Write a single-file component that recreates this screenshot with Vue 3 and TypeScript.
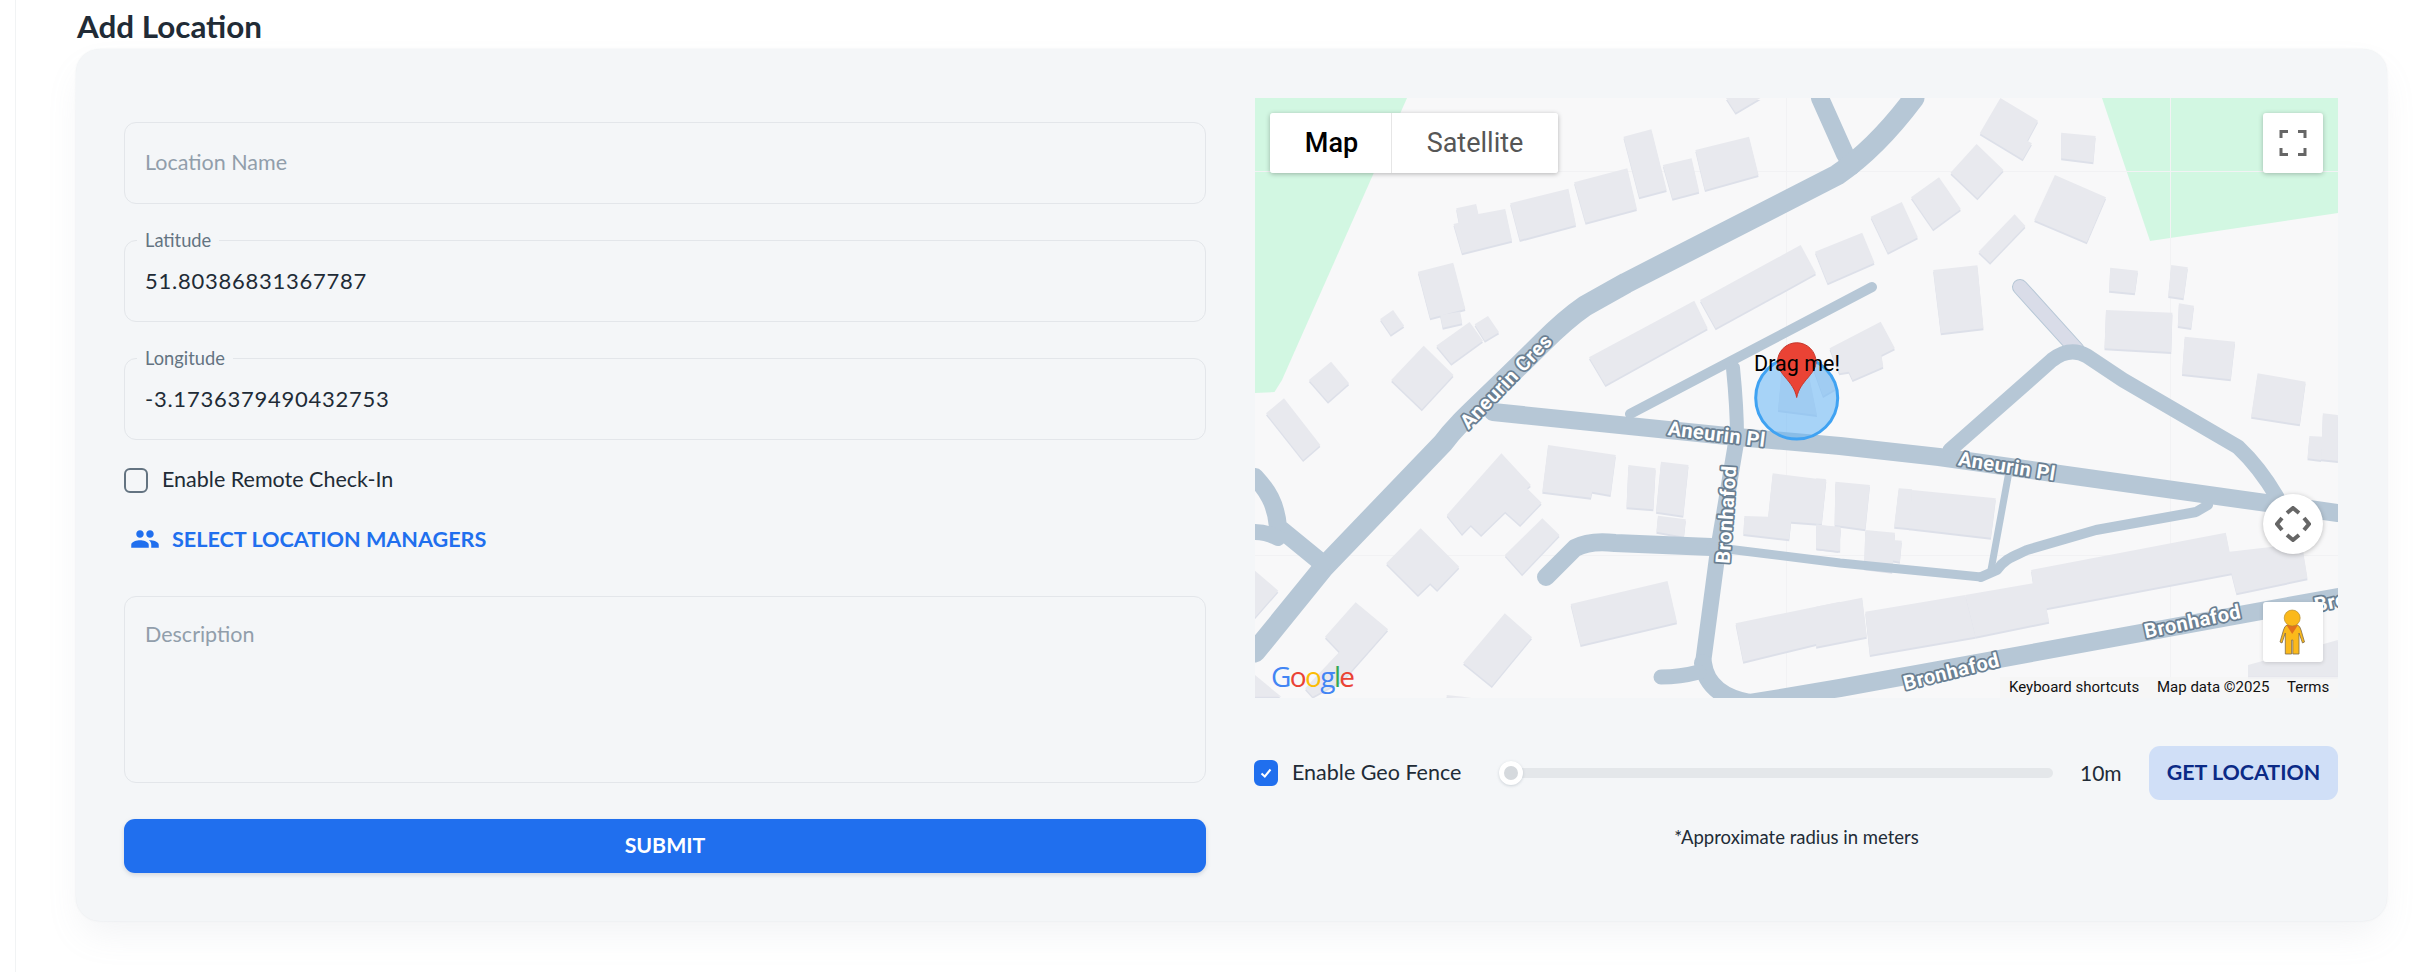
<script setup lang="ts">
type P = [number, number];
const L = (x: number, y: number): P => [x / 2.613 - 15, y / 3 - 18];
const R = (x: number, y: number): P => [565 + x / 2.605, y / 3 - 18];
const toPts = (f: (x: number, y: number) => P, a: number[]) => {
  const o: string[] = [];
  for (let i = 0; i < a.length; i += 2) {
    const p = f(a[i], a[i + 1]);
    o.push(p[0].toFixed(1) + ',' + p[1].toFixed(1));
  }
  return o.join(' ');
};
const left: number[][] = [
  [1270,54,1360,54,1295,98],
  [1002,170,1075,148,1115,330,1043,352],
  [1105,255,1180,235,1200,335,1130,356],
  [1190,210,1330,170,1355,285,1215,330],
  [873,307,1012,265,1037,387,903,428],
  [706,370,858,326,878,435,731,480],
  [558,432,572,428,565,385,617,372,623,402,693,387,711,482,580,520],
  [523,705,575,695,581,730,530,743],
  [465,575,557,548,589,687,497,715],
  [366,717,400,690,429,737,394,764],
  [513,797,600,726,635,782,552,851],
  [613,733,648,708,677,757,640,782],
  [180,900,238,845,285,910,230,965],
  [395,900,480,797,558,885,475,988],
  [912,832,1187,662,1222,745,955,915],
  [1202,660,1465,495,1505,580,1243,745],
  [68,1000,115,955,210,1095,165,1140],
  [540,1305,683,1120,760,1215,750,1225,788,1268,732,1335,693,1295,630,1365,603,1335,580,1362],
  [692,1425,790,1315,835,1365,737,1483],
  [382,1450,472,1345,573,1460,515,1530,497,1510,465,1545],
  [790,1235,805,1095,982,1125,968,1245,920,1235,917,1253],
  [1010,1282,1015,1155,1086,1165,1080,1288],
  [1087,1295,1100,1145,1172,1155,1158,1307],
  [1088,1355,1092,1307,1165,1318,1160,1370],
  [1380,1310,1392,1180,1532,1200,1520,1332,1440,1325,1435,1378,1315,1362,1318,1308],
  [1507,1405,1512,1335,1568,1340,1568,1412],
  [864,1572,1117,1503,1142,1627,890,1695],
  [1295,1630,1568,1565,1568,1675,1315,1745],
  [583,1748,692,1600,763,1672,658,1818],
  [222,1670,302,1567,387,1648,270,1800,190,1850,170,1825,260,1715],
  [39,1472,100,1532,39,1612],
  [39,1785,108,1850,39,1850],
  [540,1845,605,1853,540,1853],
];
const right: number[][] = [
  [470,54,568,122,540,182,552,190,528,238,416,160],
  [628,158,718,168,712,247,628,235],
  [408,192,478,270,410,355,340,278],
  [310,292,367,387,295,448,237,352],
  [213,366,255,472,177,518,132,410],
  [-13,515,110,458,142,548,20,610],
  [558,420,612,285,745,352,695,487],
  [507,403,535,438,443,548,413,515],
  [295,570,410,556,426,745,315,760],
  [756,563,828,572,820,640,753,632],
  [915,555,958,562,947,655,907,648],
  [935,670,974,677,967,744,932,738],
  [745,690,918,698,915,816,741,805],
  [950,770,1081,785,1070,898,943,882],
  [1140,880,1265,905,1250,1033,1123,1010],
  [1310,1000,1349,1005,1349,1143,1305,1138],
  [1275,1068,1310,1070,1305,1140,1270,1135],
  [25,805,158,725,195,805,160,825,165,860,85,900,75,875,50,880],
  [40,1205,130,1215,118,1348,38,1335],
  [118,1350,195,1358,188,1475,115,1465],
  [205,1225,240,1228,235,1345,193,1340],
  [240,1230,458,1255,445,1373,232,1345],
  [190,1380,213,1382,208,1445,183,1440],
  [-10,1195,15,1197,3,1330,-10,1330],
  [-10,1333,55,1345,48,1413,-10,1405],
  [550,1470,1057,1358,1067,1415,1255,1390,1270,1495,1085,1540,1072,1480,590,1585,597,1625,405,1670,378,1545,555,1510],
  [378,1545,405,1670,130,1725,118,1595],
  [-10,1580,110,1553,122,1670,-10,1700],
  [1115,1755,1349,1680,1349,1790,1115,1790],
];
const buildings = [
  ...left.map((a) => toPts(L, a)),
  ...right.map((a) => toPts(R, a)),
  '527,270 552,268 562,317 523,312',
  '558,270 570,262 582,290 568,298',
];
const roads = [
  { d: 'M565 0 L590 56 L597 68', w: 18 },
  { d: 'M0 554 L69 469 L188 345 C205 322 222 310 287 245 C300 232 314 219 330 208 L371 185 L582 77 C610 58 635 32 659 0', w: 21 },
  { d: 'M238 314 L482 339 L585 348 L684 359 L1083 415', w: 18 },
  { d: 'M375 316 L617 189', w: 10 },
  { d: 'M478 270 C480 290 482 310 482 339', w: 14 },
  { d: 'M482 339 L463 452 L448 565', w: 16 },
  { d: 'M448 565 Q452 597 495 605 L585 590 L1083 499', w: 18 },
  { d: 'M406 579 Q425 579 444 574', w: 15 },
  { d: 'M0 379 C12 392 21 405 23 429 L67 465', w: 18 },
  { d: 'M0 434 Q12 434 23 440', w: 16 },
  { d: 'M695 352 L797 262 Q815 248 832 258 L868 282 L983 349 C1000 365 1012 382 1022 399', w: 15 },
  { d: 'M291 479 L320 450 Q335 442 360 445 L456 449', w: 18 },
  { d: 'M456 449 L585 465 L726 479', w: 9 },
  { d: 'M726 479 L742 472 C750 460 760 458 772 452 L841 432 L941 414 L953 407', w: 10 },
  { d: 'M753 379 L736 472', w: 7 },
];
const labels = [
  { t: 'Aneurin Cres', x: 256, y: 288, r: -46, a: 'middle' },
  { t: 'Aneurin Pl', x: 461, y: 343, r: 7, a: 'middle' },
  { t: 'Aneurin Pl', x: 751, y: 375, r: 9, a: 'middle' },
  { t: 'Bronhafod', x: 478, y: 417, r: -86, a: 'middle' },
  { t: 'Bronhafod', x: 698, y: 580, r: -14, a: 'middle' },
  { t: 'Bronhafod', x: 939, y: 530, r: -12, a: 'middle' },
  { t: 'Bro', x: 1061, y: 514, r: -12, a: 'start' },
];
</script>

<template>
  <div class="page">
    <main class="content">
      <h1 class="title">Add Location</h1>
      <section class="card">
        <div class="form">
          <div class="field"><input class="input" placeholder="Location Name" /></div>
          <div class="field">
            <span class="legend">Latitude</span>
            <input class="input value-input" readonly value="51.80386831367787" />
          </div>
          <div class="field">
            <span class="legend">Longitude</span>
            <input class="input value-input" readonly value="-3.1736379490432753" />
          </div>
          <label class="check remote"><span class="box"></span><span class="check-text">Enable Remote Check-In</span></label>
          <button class="managers" type="button">
            <svg width="30" height="30" viewBox="0 0 24 24" fill="#206fee"><path d="M16 11c1.66 0 2.99-1.34 2.99-3S17.66 5 16 5c-1.66 0-3 1.34-3 3s1.34 3 3 3zm-8 0c1.66 0 2.99-1.34 2.99-3S9.66 5 8 5C6.34 5 5 6.34 5 8s1.34 3 3 3zm0 2c-2.33 0-7 1.17-7 3.5V19h14v-2.5c0-2.33-4.67-3.5-7-3.5zm8 0c-.29 0-.62.02-.97.05 1.16.84 1.97 1.97 1.97 3.45V19h6v-2.5c0-2.33-4.67-3.5-7-3.5z"/></svg>
            <span>SELECT LOCATION MANAGERS</span>
          </button>
          <textarea class="textarea" placeholder="Description"></textarea>
          <button class="submit" type="button">SUBMIT</button>
        </div>
        <div class="side">
          <div class="map">
            <svg class="tiles" width="1083" height="600" viewBox="0 0 1083 600">
              <rect width="1083" height="600" fill="#f8f8f9" />
              <polygon points="0,0 152,0 27,282 19.5,294 0,295" fill="#d2f7e2" />
              <polygon points="847,0 1083,0 1083,115 895,143" fill="#d2f7e2" />
              <g stroke="#f2f2f4" stroke-width="1">
                <line x1="0" y1="73.5" x2="1083" y2="73.5" />
                <line x1="0" y1="457.5" x2="1083" y2="457.5" />
                <line x1="531.5" y1="0" x2="531.5" y2="600" />
                <line x1="915.5" y1="0" x2="915.5" y2="600" />
              </g>
              <g fill="#dde0e9" transform="translate(0 2)">
                <polygon v-for="(b, i) in buildings" :key="'s' + i" :points="b" />
              </g>
              <g fill="#e8e9ee">
                <polygon v-for="(b, i) in buildings" :key="'b' + i" :points="b" />
              </g>
              <path d="M765 189 L822 252" stroke="#b6c7d6" stroke-width="16" stroke-linecap="round" fill="none" />
              <path d="M765 189 L822 252" stroke="#d9dce8" stroke-width="14" stroke-linecap="round" fill="none" />
              <g fill="none" stroke="#b6c7d6" stroke-linecap="round" stroke-linejoin="round">
                <path v-for="(r, i) in roads" :key="'r' + i" :d="r.d" :stroke-width="r.w" />
              </g>
              <circle cx="541.7" cy="300" r="41" fill="#64b5f6" fill-opacity="0.55" stroke="#3fa2f2" stroke-width="3" />
              <g class="road-label">
                <text v-for="(l, i) in labels" :key="'l' + i" :transform="`translate(${l.x} ${l.y}) rotate(${l.r})`" :text-anchor="l.a">{{ l.t }}</text>
              </g>
              <path d="M541.7 299.5 C540 291 536 286 530 279 C525 273 522.5 269 522.5 264 A19.2 19.2 0 0 1 561 264 C561 269 558.5 273 553.5 279 C547.5 286 543.5 291 541.7 299.5 Z" fill="#ea4335" stroke="#c5372c" stroke-width="1" />
              <text class="drag" x="542" y="273" text-anchor="middle">Drag me!</text>
            </svg>

            <div class="map-type">
              <button class="type active" type="button">Map</button>
              <button class="type" type="button">Satellite</button>
            </div>

            <button class="ctl fullscreen" type="button" aria-label="Fullscreen">
              <svg width="28" height="28" viewBox="0 0 28 28" fill="none" stroke="#666" stroke-width="3">
                <path d="M2 9V2.5H9M19 2.5H26V9M26 19V25.500H19M9 25.500H2V19" />
              </svg>
            </button>

            <button class="ctl camera" type="button" aria-label="Camera">
              <svg width="36" height="36" viewBox="0 0 36 36" fill="none" stroke="#666" stroke-width="4">
                <path d="M12 7L18 2L24 7M12 29L18 34L24 29M7 12L2 18L7 24M29 12L34 18L29 24" />
              </svg>
            </button>

            <button class="ctl pegman" type="button" aria-label="Street View">
              <svg width="60" height="60" viewBox="0 0 60 60">
                <path d="M24 23 L34.500 23 Q37 24 38 28 L41.500 40 L39.500 41 L36 31 L36 52 L29.800 52 L29.800 38 L28.600 38 L28.600 52 L22.300 52 L22.300 31 L19 41 L17 40 L20.500 28 Q21.500 24 24 23 Z" fill="#fbb91b" stroke="#7d6b4a" stroke-width="0.8" />
                <path d="M23.500 23 L35 23 L29.200 32 Z" fill="#e2711d" />
                <circle cx="29.200" cy="16" r="8" fill="#fbb91b" stroke="#a9842c" stroke-width="0.6" />
              </svg>
            </button>

            <div class="google"><span class="gb">G</span><span class="gr">o</span><span class="gy">o</span><span class="gb">g</span><span class="gg">l</span><span class="gr">e</span></div>

            <div class="attr">
              <span class="kb">Keyboard shortcuts</span>
              <span class="md">Map data ©2025</span>
              <span class="tm">Terms</span>
            </div>
          </div>

          <div class="fence">
            <label class="check geo">
              <span class="box on">
                <svg width="16" height="16" viewBox="0 0 16 16" fill="none" stroke="#fff" stroke-width="2"><path d="M3.500 8.500L6.800 11.500L12.500 4.500" /></svg>
              </span>
              <span class="check-text">Enable Geo Fence</span>
            </label>
            <div class="slider"><span class="thumb"></span></div>
            <span class="value">10m</span>
            <button class="get" type="button">GET LOCATION</button>
          </div>
          <p class="hint">*Approximate radius in meters</p>
        </div>
      </section>
    </main>
  </div>
</template>

<style>
html, body { margin: 0; background: #fff; overflow: hidden; }
</style>

<style scoped>
* { box-sizing: border-box; }
.page {
  width: 2422px;
  height: 972px;
  overflow: hidden;
  font-family: Lato, "Noto Sans", sans-serif;
  color: #212b36;
  padding-left: 15px;
}
.content {
  height: 972px;
  border-left: 1px solid #f1f3f4;
  padding-left: 60px;
}
.title {
  margin: 0;
  height: 49px;
  padding-left: 1px;
  font-size: 31.4px;
  line-height: 52px;
  font-weight: 700;
}
.card {
  width: 2311px;
  height: 872px;
  background: #f4f6f8;
  border-radius: 24px;
  padding: 49px 49px 0 48px;
  display: flex;
  gap: 49px;
  box-shadow: 0 0 2px rgba(145, 158, 171, 0.2), 0 18px 36px -6px rgba(145, 158, 171, 0.12);
}
.form { width: 1082px; padding-top: 24px; display: flex; flex-direction: column; }
.field { position: relative; height: 82px; margin-bottom: 36px; }
.input, .textarea {
  display: block;
  width: 100%;
  background: transparent;
  border: 1.500px solid #e3e6ea;
  border-radius: 12px;
  font-family: inherit;
  font-size: 21.5px;
  color: #212b36;
  outline: none;
}
.input { height: 100%; padding: 0 20px 2px; }
.value-input { font-size: 22px; letter-spacing: 0.75px; }
.input::placeholder, .textarea::placeholder { color: #919eab; opacity: 1; }
.legend {
  position: absolute;
  left: 13px;
  top: -10px;
  padding: 0 8px;
  background: #f4f6f8;
  font-size: 18.300px;
  line-height: 20px;
  color: #637381;
}
.check { display: flex; align-items: center; font-size: 21.5px; line-height: 26px; }
.check-text { padding-bottom: 2px; }
.remote { height: 26px; margin: -9px 0 0; gap: 14px; color: #212b36; }
.box {
  width: 24px;
  height: 25px;
  border: 2.500px solid #637381;
  border-radius: 6px;
  flex: none;
  display: flex;
  align-items: center;
  justify-content: center;
}
.box.on { background: #206fee; border-color: #206fee; height: 26px; }
.managers {
  margin-top: 26px;
  height: 40px;
  padding: 0 0 0 6px;
  align-self: flex-start;
  display: flex;
  align-items: center;
  gap: 12px;
  background: none;
  border: 0;
  font-family: inherit;
  font-size: 21.6px;
  font-weight: 700;
  color: #206fee;
}
.textarea {
  margin-top: 37px;
  height: 187px;
  padding: 24px 20px;
  resize: none;
}
.submit {
  margin-top: 36px;
  height: 54px;
  border: 0;
  border-radius: 11px;
  background: #206fee;
  color: #fff;
  font-family: inherit;
  font-size: 21.3px;
  font-weight: 700;
  padding: 0 0 2px;
  box-shadow: 0 2px 4px rgba(145, 158, 171, 0.35);
}
.side { width: 1083px; display: flex; flex-direction: column; }
.map { position: relative; width: 1083px; height: 600px; overflow: hidden; }
.tiles { display: block; }
.road-label text {
  font-family: Roboto, sans-serif;
  font-weight: 700;
  font-size: 20px;
  letter-spacing: 0.5px;
  fill: #fff;
  stroke: #6a7f92;
  stroke-width: 3.500px;
  paint-order: stroke;
  stroke-linejoin: round;
}
.drag { font-family: Roboto, sans-serif; font-size: 21.5px; fill: #000; }
.map-type {
  position: absolute;
  left: 15px;
  top: 15px;
  display: flex;
  height: 60px;
  border-radius: 3px;
  overflow: hidden;
  box-shadow: 0 1px 5px rgba(0, 0, 0, 0.28);
}
.type {
  background: #fff;
  border: 0;
  font-family: Roboto, sans-serif;
  font-size: 27px;
  color: #565656;
  padding: 0;
  width: 166px;
}
.type.active { width: 122px; color: #000; font-weight: 500; border-right: 1px solid #e6e6e6; padding-left: 2px; }
.ctl {
  position: absolute;
  left: 1008px;
  width: 60px;
  height: 60px;
  padding: 0;
  background: #fff;
  border: 0;
  border-radius: 3px;
  box-shadow: 0 1px 5px rgba(0, 0, 0, 0.25);
  display: flex;
  align-items: center;
  justify-content: center;
}
.fullscreen { top: 15px; }
.camera { top: 396px; border-radius: 50%; }
.pegman { top: 504px; box-shadow: 0 1px 4px rgba(0, 0, 0, 0.15); }
.google {
  position: absolute;
  left: 16px;
  top: 559px;
  font-family: "Open Sans", sans-serif;
  font-size: 28px;
  line-height: 38px;
  letter-spacing: -1.600px;
  font-weight: 400;
}
.gb { color: #4285f4; }
.gr { color: #ea4335; }
.gy { color: #fbbc05; }
.gg { color: #34a853; }
.attr {
  position: absolute;
  left: 745px;
  top: 579px;
  width: 338px;
  height: 21px;
  background: rgba(245, 245, 245, 0.8);
  font-family: Roboto, sans-serif;
  font-size: 15px;
  line-height: 21px;
  color: #111;
  display: flex;
  padding-left: 9px;
}
.kb { width: 148px; }
.md { width: 130px; }
.fence {
  margin-top: 48px;
  height: 54px;
  display: flex;
  align-items: center;
}
.geo { gap: 14px; width: 245px; margin-left: -1px; flex: none; }
.slider {
  position: relative;
  width: 554px;
  height: 10px;
  border-radius: 5px;
  background: #e4e7ea;
  flex: none;
}
.thumb {
  position: absolute;
  left: 0;
  top: -7px;
  width: 24px;
  height: 24px;
  border-radius: 50%;
  background: #d5d9dd;
  border: 5px solid #fff;
  box-shadow: 0 1px 3px rgba(145, 158, 171, 0.4);
}
.value { margin-left: 27px; width: 69px; font-size: 21px; flex: none; padding-bottom: 2px; }
.get {
  width: 189px;
  height: 54px;
  border: 0;
  border-radius: 11px;
  background: #d0dff7;
  color: #0b2a86;
  font-family: inherit;
  font-size: 21.4px;
  font-weight: 700;
  padding: 0 0 2px;
  flex: none;
}
.hint {
  margin: 24px 0 0;
  text-align: center;
  font-size: 18.5px;
  line-height: 26px;
  color: #212b36;
}
</style>
